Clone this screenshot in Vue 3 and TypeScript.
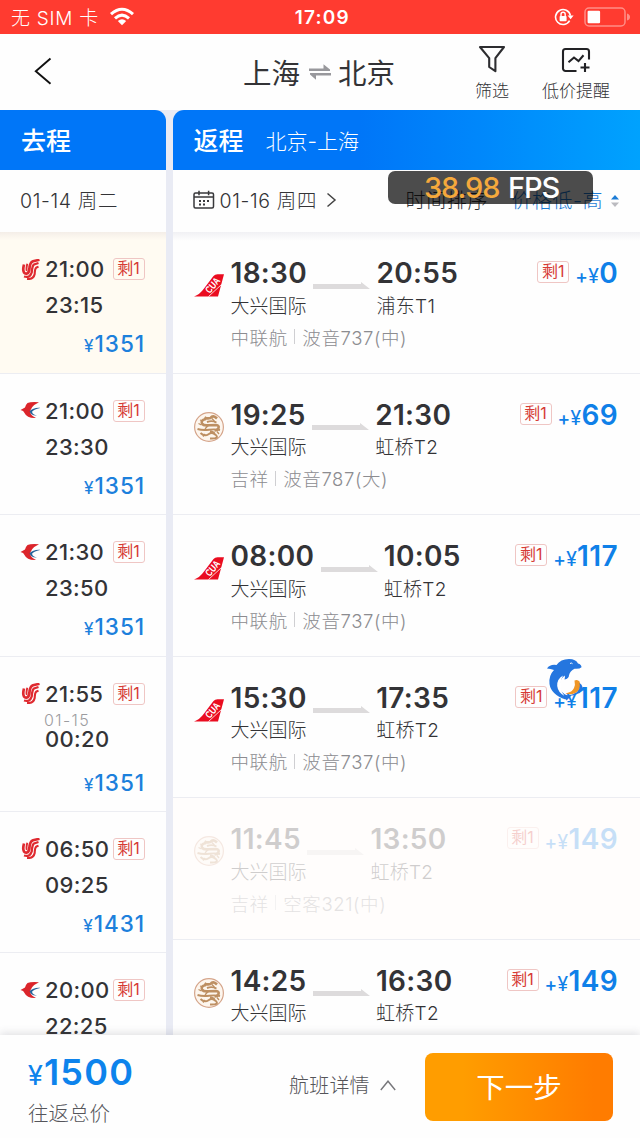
<script setup lang="ts">
type Outbound = { logo: 'air' | 'eastern'; dep: string; arr: string; day?: string; price?: number; selected?: boolean }
type Inbound = { logo: 'cua' | 'juneyao'; dep: string; arr: string; from: string; to: string; airline?: string; plane?: string; extra: number; faded?: boolean }

const outbound: Outbound[] = [
  { logo: 'air', dep: '21:00', arr: '23:15', price: 1351, selected: true },
  { logo: 'eastern', dep: '21:00', arr: '23:30', price: 1351 },
  { logo: 'eastern', dep: '21:30', arr: '23:50', price: 1351 },
  { logo: 'air', dep: '21:55', day: '01-15', arr: '00:20', price: 1351 },
  { logo: 'air', dep: '06:50', arr: '09:25', price: 1431 },
  { logo: 'eastern', dep: '20:00', arr: '22:25' },
]
const inbound: Inbound[] = [
  { logo: 'cua', dep: '18:30', arr: '20:55', from: '大兴国际', to: '浦东T1', airline: '中联航', plane: '波音737(中)', extra: 0 },
  { logo: 'juneyao', dep: '19:25', arr: '21:30', from: '大兴国际', to: '虹桥T2', airline: '吉祥', plane: '波音787(大)', extra: 69 },
  { logo: 'cua', dep: '08:00', arr: '10:05', from: '大兴国际', to: '虹桥T2', airline: '中联航', plane: '波音737(中)', extra: 117 },
  { logo: 'cua', dep: '15:30', arr: '17:35', from: '大兴国际', to: '虹桥T2', airline: '中联航', plane: '波音737(中)', extra: 117 },
  { logo: 'juneyao', dep: '11:45', arr: '13:50', from: '大兴国际', to: '虹桥T2', airline: '吉祥', plane: '空客321(中)', extra: 149, faded: true },
  { logo: 'juneyao', dep: '14:25', arr: '16:30', from: '大兴国际', to: '虹桥T2', extra: 149 },
]
</script>

<template>
  <div class="phone">
    <div class="status">
      <span class="carrier">无 SIM 卡</span>
      <svg class="wifi" width="26" height="19" viewBox="0 0 26 19">
        <g fill="none" stroke="#fff" stroke-width="3">
          <path d="M2 7.2Q13-2.8 24 7.2" />
          <path d="M6 11.3Q13 5 20 11.3" />
        </g>
        <path d="M8.8 14Q13 10.4 17.2 14L13 18.3Z" fill="#fff" />
      </svg>
      <span class="clock">17:09</span>
      <svg class="lock" width="20" height="18" viewBox="0 0 20 18" fill="none" stroke="#fff" stroke-width="1.6">
        <path d="M15.6 12.7A7.5 7.5 0 1 1 16.4 7.6" />
        <path d="M13.6 7.6h6l-3 3.7z" fill="#fff" stroke="none" />
        <rect x="5.6" y="8" width="7" height="5.2" rx=".8" fill="#fff" stroke="none" />
        <path d="M7 8V6.4a2.1 2.1 0 0 1 4.2 0V8" stroke-width="1.4" />
      </svg>
      <svg class="battery" width="46" height="20" viewBox="0 0 46 20">
        <rect x="1" y="1" width="40" height="18" rx="4" fill="none" stroke="#ff8e87" stroke-width="1.5" />
        <rect x="3.6" y="3.8" width="12.5" height="12.5" rx="1.2" fill="#fff" />
        <path d="M43 6.5q3 1 3 3.5t-3 3.5z" fill="#ff8e87" />
      </svg>
    </div>

    <header class="nav">
      <svg class="back" width="18" height="28" viewBox="0 0 18 28" fill="none" stroke="#111" stroke-width="1.9">
        <path d="M16.5 1.5L1.8 14.2 16.5 26.8" />
      </svg>
      <div class="title">
        <span>上海</span>
        <svg width="22" height="16" viewBox="0 0 22 16" fill="#98989c">
          <path d="M0 4.5h14.5V.2L21 5.4V7H0z" />
          <path d="M22 9H1v1.500L7 15.800v-4.200h15z" />
        </svg>
        <span>北京</span>
      </div>
      <div class="tool filter">
        <svg width="28" height="28" viewBox="0 0 28 28" fill="none" stroke="#2d2d30" stroke-width="2.1" stroke-linejoin="round">
          <path d="M2 2h24L17.4 13.2v13L11.2 22V13.2Z" />
        </svg>
        <span>筛选</span>
      </div>
      <div class="tool alert">
        <svg width="30" height="28" viewBox="0 0 30 28" fill="none" stroke="#222225" stroke-width="2.1">
          <path d="M15.500 26H4.500A2.500 2.500 0 0 1 2 23.500V6.500A2.500 2.500 0 0 1 4.500 4h21A2.500 2.500 0 0 1 28 6.500v8" />
          <path d="M7.500 17.300L13 12.500l4.500 3.600L22.500 10.300M24 18v9M19.500 22.500h9" />
        </svg>
        <span>低价提醒</span>
      </div>
    </header>

    <div class="columns">
      <section class="out">
        <div class="head"><b>去程</b></div>
        <div class="date"><span>01-14 周二</span></div>
        <div class="list">
          <article v-for="(f, i) in outbound" :key="i" class="leg" :class="{ selected: f.selected, next: f.day }">
            <div class="legtop">
              <svg v-if="f.logo === 'air'" class="carrier-logo" width="20" height="21" viewBox="0 0 20 21" fill="none" stroke="#df2a30">
                <path d="M4 5.500Q2.500 11 4 13.500q1 1.500 3 1 2-.7 2.400-4.500Q9.800 3.500 13 2.300l6.500-1.500" stroke-width="2.700" />
                <path d="M7.300 4.800Q6 10 6.800 11.800" stroke-width="1.900" />
                <path d="M4 17.500q6 1.800 7.700-4Q12.300 6.500 14 5.500l4.500-1.500" stroke-width="2.300" />
                <path d="M7 20q6.500.5 7.700-5Q14.800 9.500 16.500 8.500l2-.9" stroke-width="2.100" />
              </svg>
              <svg v-else class="carrier-logo" width="20" height="21" viewBox="0 0 20 21">
                <path d="M19 2.200Q11 1.500 7.500 3 5.500 5 5 7.500L.5 10q3.200.4 4 3 2.500 5.500 11.500 5-5-2.300-5.700-5.500Q10 6.500 19 2.200Z" fill="#db252b" />
                <path d="M20.500 7.800q-7-.7-11 3.400 2 5 7.500 4.300-4.300-.6-5-3.700Q14.500 8.800 20.500 7.800Z" fill="#27639a" />
              </svg>
              <span class="t">{{ f.dep }}</span>
              <span class="left">剩1</span>
            </div>
            <div v-if="f.day" class="day">{{ f.day }}</div>
            <div class="t arrive">{{ f.arr }}</div>
            <div v-if="f.price" class="fare"><i>¥</i>{{ f.price }}</div>
          </article>
        </div>
      </section>

      <section class="back-col">
        <div class="head wide"><b>返程</b><span>北京-上海</span></div>
        <div class="date tools">
          <svg class="calendar" width="22" height="20" viewBox="0 0 22 20" fill="none" stroke="#38383b" stroke-width="1.500">
            <rect x="1" y="3" width="19.500" height="15" rx="1.500" />
            <path d="M1 7h19.500M6 .8v4.500M15.600.8v4.500" />
            <path d="M6 11h10M6 14.500h7" stroke-width="2" stroke-dasharray="2 2" />
          </svg>
          <span class="day-pick">01-16 周四</span>
          <svg class="chev" width="11" height="16" viewBox="0 0 11 16" fill="none" stroke="#444" stroke-width="1.500"><path d="M1.500 1.500L9 8l-7.500 6.500" /></svg>
          <span class="by-time">时间排序</span>
          <span class="by-price">价格低-高</span>
          <svg class="sort" width="8" height="12" viewBox="0 0 8 12"><path d="M0 4.500L4 0l4 4.500z" fill="#1c7cd6" /><path d="M0 7.500h8L4 12z" fill="#bbbbc0" /></svg>
        </div>
        <div class="list">
          <article v-for="(f, i) in inbound" :key="i" class="flight" :class="{ faded: f.faded }">
            <svg v-if="f.logo === 'cua'" class="logo" width="31" height="32" viewBox="0 0 31 32">
              <path d="M0 27.500Q5.500 25.800 10 19.500L19.500 7Q21 5.200 23.500 5.200H30L24 27.500Z" fill="#ea0c20" />
              <path d="M14.500 27.500L27.500 15.500" stroke="#fff" stroke-width=".8" />
              <text transform="translate(21.300 18.500) rotate(-50)" text-anchor="middle" textLength="17" lengthAdjust="spacingAndGlyphs" class="cua">CUA</text>
            </svg>
            <svg v-else class="logo" width="31" height="32" viewBox="0 0 31 32" fill="none" stroke="#bd8f62">
              <circle cx="15" cy="16" r="14.400" fill="#fdf6ee" stroke="#d5a58b" stroke-width="1.200" />
              <path d="M23 7.500Q19 3.500 16.500 7q-3.500 1-6-.7M12 8Q6.500 9 8 12.500q1.500 2.500 7 1.700l7-.2q3.500.5 2.500 3t-4 2.500" stroke-width="2.600" />
              <path d="M3.500 18q5 1.500 11.500.7t11 .3M6.500 22q4 4 8 1.200t7.500 1-6 3.300M13 11q5-2 9.500.5M16 20.500q6 .5 4 3.500" stroke-width="1.900" />
              <path d="M4.500 12.500l3 1.500M9 25.500l2-2.500M18 7.500l3.500 4M23 20.500l2 2.500M11 18l3-3.500M6 9l3 1" stroke-width="1.300" />
            </svg>
            <div class="route">
              <span class="time">{{ f.dep }}</span>
              <svg class="arrow" width="57" height="7" viewBox="0 0 57 7"><path d="M0 2h48V0l9 7H0z" fill="#dddbdc" /></svg>
              <span class="time">{{ f.arr }}</span>
              <span class="port">{{ f.from }}</span>
              <span class="port to">{{ f.to }}</span>
              <span v-if="f.plane" class="plane">{{ f.airline }}<em></em>{{ f.plane }}</span>
            </div>
            <div class="extra">
              <span class="left">剩1</span>
              <span class="plus">+<i>¥</i></span><strong>{{ f.extra }}</strong>
            </div>
          </article>
        </div>
      </section>
    </div>

    <footer class="footer">
      <div class="total">
        <div class="sum"><i>¥</i>1500</div>
        <div class="sum-label">往返总价</div>
      </div>
      <div class="details"><span>航班详情</span>
        <svg width="16" height="11" viewBox="0 0 16 11" fill="none" stroke="#77777b" stroke-width="1.400"><path d="M.8 10L8 1.200 15.200 10" /></svg>
      </div>
      <button class="next-btn">下一步</button>
    </footer>

    <div class="fps"><span>38.98</span> FPS</div>
    <svg class="dolphin" width="40" height="44" viewBox="0 0 40 44">
      <path d="M1 11.500Q4 7 10.500 8 14.500 2 23 2 30 2 32 6.500q3.500 1 3.500 3.700-2 2-7 1.500-4.500 2-5.500 6.500 0 3.500-4.500 4.300.8-2.500.2-4-5.200 4-5.200 11Q14.500 36 22 39L19.500 42.500Q5 37.500 3.500 27 2.500 18.500 8 13 4.500 11.500 1 11.500Z" fill="#2476df" />
      <path d="M17 18.500Q10.800 22 11.200 29 12 35.500 18.500 39 14 33 14.500 27 15 22 17 18.500Z" fill="#fff" />
      <path d="M24 6.500q1.500-1 2.500.2" fill="none" stroke="#fff" stroke-width="1" />
      <path d="M28.500 23.500q3-1.500 5 1 2 5-1 9-5 5.500-13 3 7-1.500 8.500-5.500Q29.500 28 28.500 23.500Z" fill="#ef9626" />
      <path d="M33.500 26q4.500 2.500 2 7.500-4.500 5-10 5l-5 5-2.500-5.500q11.500 1 15-5.500 1.500-3 .5-6.500Z" fill="#2476df" />
    </svg>
  </div>
</template>

<style>
html, body { margin: 0; background: #fff; }
</style>

<style scoped>
.phone { position: relative; display: flex; flex-direction: column; width: 640px; height: 1138px; overflow: hidden; background: #fefefe; color: #333336; font-family: Inter, "Noto Sans CJK SC", sans-serif; white-space: nowrap; }
svg { display: block; flex: none; }
i { font-style: normal; font-family: Roboto, sans-serif; }
.status { display: flex; align-items: center; flex: none; height: 34px; box-sizing: border-box; padding: 0 10px 0 11px; background: #ff3b30; color: #fff; font-size: 19px; }
.carrier { width: 99px; margin-top: -2px; font-weight: 300; letter-spacing: .75px; }
.wifi { margin-top: -1px; }
.clock { margin-left: 160px; width: 58px; font-size: 19px; font-weight: 600; letter-spacing: 1.200px; }
.lock { margin-left: 202px; }
.battery { margin-left: 10px; }

.nav { display: flex; flex: none; height: 76px; background: #fefefe; }
.back { margin: 23px 0 0 34px; }
.title { display: flex; align-items: center; margin-left: 191px; width: 152px; height: 76px; font-size: 28.500px; gap: 8px; }
.title svg { margin-left: 1px; }
.title span { margin-top: -1px; }
.title span:last-child { margin-left: -1px; }
.tool { display: flex; flex-direction: column; align-items: center; font-size: 17px; font-weight: 300; line-height: 22px; }
.tool svg { margin-top: 11px; margin-bottom: 7px; }
.filter { margin-left: 79px; width: 36px; }
.alert { margin-left: 31px; width: 70px; }

.columns { display: flex; flex: none; height: 925px; gap: 7px; background: #e9ebf4; overflow: hidden; }
.out { width: 165.500px; }
.back-col { width: 467.500px; }
.head { display: flex; align-items: center; height: 60px; box-sizing: border-box; padding: 0 0 3px 21px; background: #0076f8; color: #fff; border-radius: 0 11px 0 0; }
.head b { font-size: 25px; font-weight: 500; }
.head.wide { border-radius: 11px 0 0 0; background: linear-gradient(90deg, #0076f8 40%, #0087fb 65%, #00a2fe 100%); }
.head span { margin: 3px 0 0 22px; font-size: 21px; font-weight: 300; }
.date { display: flex; align-items: center; height: 62px; box-sizing: border-box; padding-left: 20px; background: #fefefe; font-size: 19.500px; font-weight: 300; }
.date span { margin-top: -4px; letter-spacing: .65px; }
.tools .calendar { margin-top: -2px; }
.tools .day-pick { width: 106px; margin-left: 5px; }
.tools .chev { margin-top: -2px; }
.tools .by-time { margin-left: 69px; width: 106px; font-size: 20px; }
.tools .by-price { width: 98px; font-size: 20px; color: #1c7cd6; letter-spacing: .5px; }
.tools .sort { margin-left: 1px; }
.list { background: #fefefe linear-gradient(#f1f1f4, #fefefe) 0 0 / 100% 9px no-repeat; }

.leg { height: 141.600px; box-sizing: border-box; padding: 24px 21px 0 20px; border-bottom: 1.600px solid #ecedf2; }
.leg.selected { background: linear-gradient(#f4eee8, #fffbf2 8px); }
.leg.next { height: 155px; }
.legtop { display: flex; align-items: center; height: 26px; }
.carrier-logo { margin-right: 5px; }
.t { font-size: 22px; font-weight: 500; line-height: 26px; letter-spacing: .35px; }
.legtop .t { width: 68px; }
.arrive { margin: 10px 0 0 25px; }
.day { margin: 3px 0 -4px 24px; height: 20px; line-height: 20px; font-size: 16px; font-weight: 300; letter-spacing: 1.400px; color: #9c9ca0; }
.day + .arrive { margin-top: 0; }
.fare { margin: 13px -.7px 0 0; text-align: right; font-size: 22.500px; font-weight: 500; line-height: 26px; letter-spacing: 1px; color: #1c80dc; }
.next .fare { margin-top: 18px; }
.fare i { font-size: 18px; font-weight: 400; }
.left { box-sizing: border-box; width: 32px; height: 22px; border: 1px solid #efc6c4; border-radius: 3px; font-size: 16px; line-height: 19px; text-align: center; color: #d63a35; font-weight: 400; flex: none; }

.flight { display: flex; height: 141.600px; box-sizing: border-box; padding: 25px 22px 0 21px; border-bottom: 1.600px solid #ecedf2; }
.logo { margin-top: 12px; }
.cua { font: bold 10px "Liberation Sans", sans-serif; fill: #fff; stroke: none; }
.route { display: grid; grid-template-columns: auto auto auto; grid-template-rows: 33px 32px 33px; justify-content: start; align-items: center; margin-left: 6px; }
.time { font-size: 28px; font-weight: 600; line-height: 33px; letter-spacing: .3px; }
.arrow { margin: 23px 6px 0 6.500px; }
.port { grid-row: 2; grid-column: 1 / 3; margin-top: -4px; font-size: 19px; font-weight: 300; }
.port.to { grid-column: 3; letter-spacing: .3px; }
.plane { grid-row: 3; grid-column: 1 / 4; display: flex; align-items: center; margin-top: -4px; font-size: 18.500px; font-weight: 300; letter-spacing: .6px; color: #8c8c90; }
.plane em { width: 1px; height: 15px; margin: 0 7px 0 6.500px; background: #cfcfd2; }
.extra { display: flex; align-items: baseline; margin-left: auto; height: 33px; color: #0f80e8; line-height: 33px; }
.extra .left { align-self: flex-start; margin: 4px 6px 0 0; }
.plus { font-size: 19px; font-weight: 500; letter-spacing: .3px; }
.plus i { font-size: 20px; font-weight: 400; }
.extra strong { font-size: 28px; font-weight: 600; letter-spacing: .4px; }
.faded { background: #fffdfc; }
.faded > * { opacity: .23; }

.footer { position: relative; display: flex; flex: 1; background: #fefefe; box-shadow: 0 -2px 8px rgba(70, 70, 90, .16); }
.total { width: 289px; box-sizing: border-box; padding: 16px 0 0 28px; }
.sum { font-size: 36px; font-weight: 600; line-height: 42px; letter-spacing: 1.200px; color: #0d83ec; }
.sum i { font-size: 28px; font-weight: 400; }
.sum-label { margin-top: 2px; font-size: 20.500px; font-weight: 300; line-height: 30px; color: #55555a; }
.details { display: flex; gap: 10px; align-items: center; width: 136px; height: 101px; font-size: 20px; font-weight: 300; color: #55555a; }
.details span { margin-top: -3px; letter-spacing: .2px; }
.next-btn { width: 188px; height: 68px; margin: 18px 0 0; padding: 0 0 3px; border: 0; border-radius: 8px; background: linear-gradient(90deg, #ff9d00 20%, #ff7c00 90%); color: #fff; font: 400 28.500px Inter, "Noto Sans CJK SC", sans-serif; }

.fps { position: absolute; left: 388px; top: 171px; width: 205px; height: 33px; box-sizing: border-box; padding-left: 36px; border-radius: 7px; background: rgba(0, 0, 0, .7); color: #fff; font-size: 29px; font-weight: 500; line-height: 34px; letter-spacing: -1.100px; word-spacing: 2px; }
.fps span { color: #f5a93c; }
.dolphin { position: absolute; left: 546px; top: 657px; }
</style>
